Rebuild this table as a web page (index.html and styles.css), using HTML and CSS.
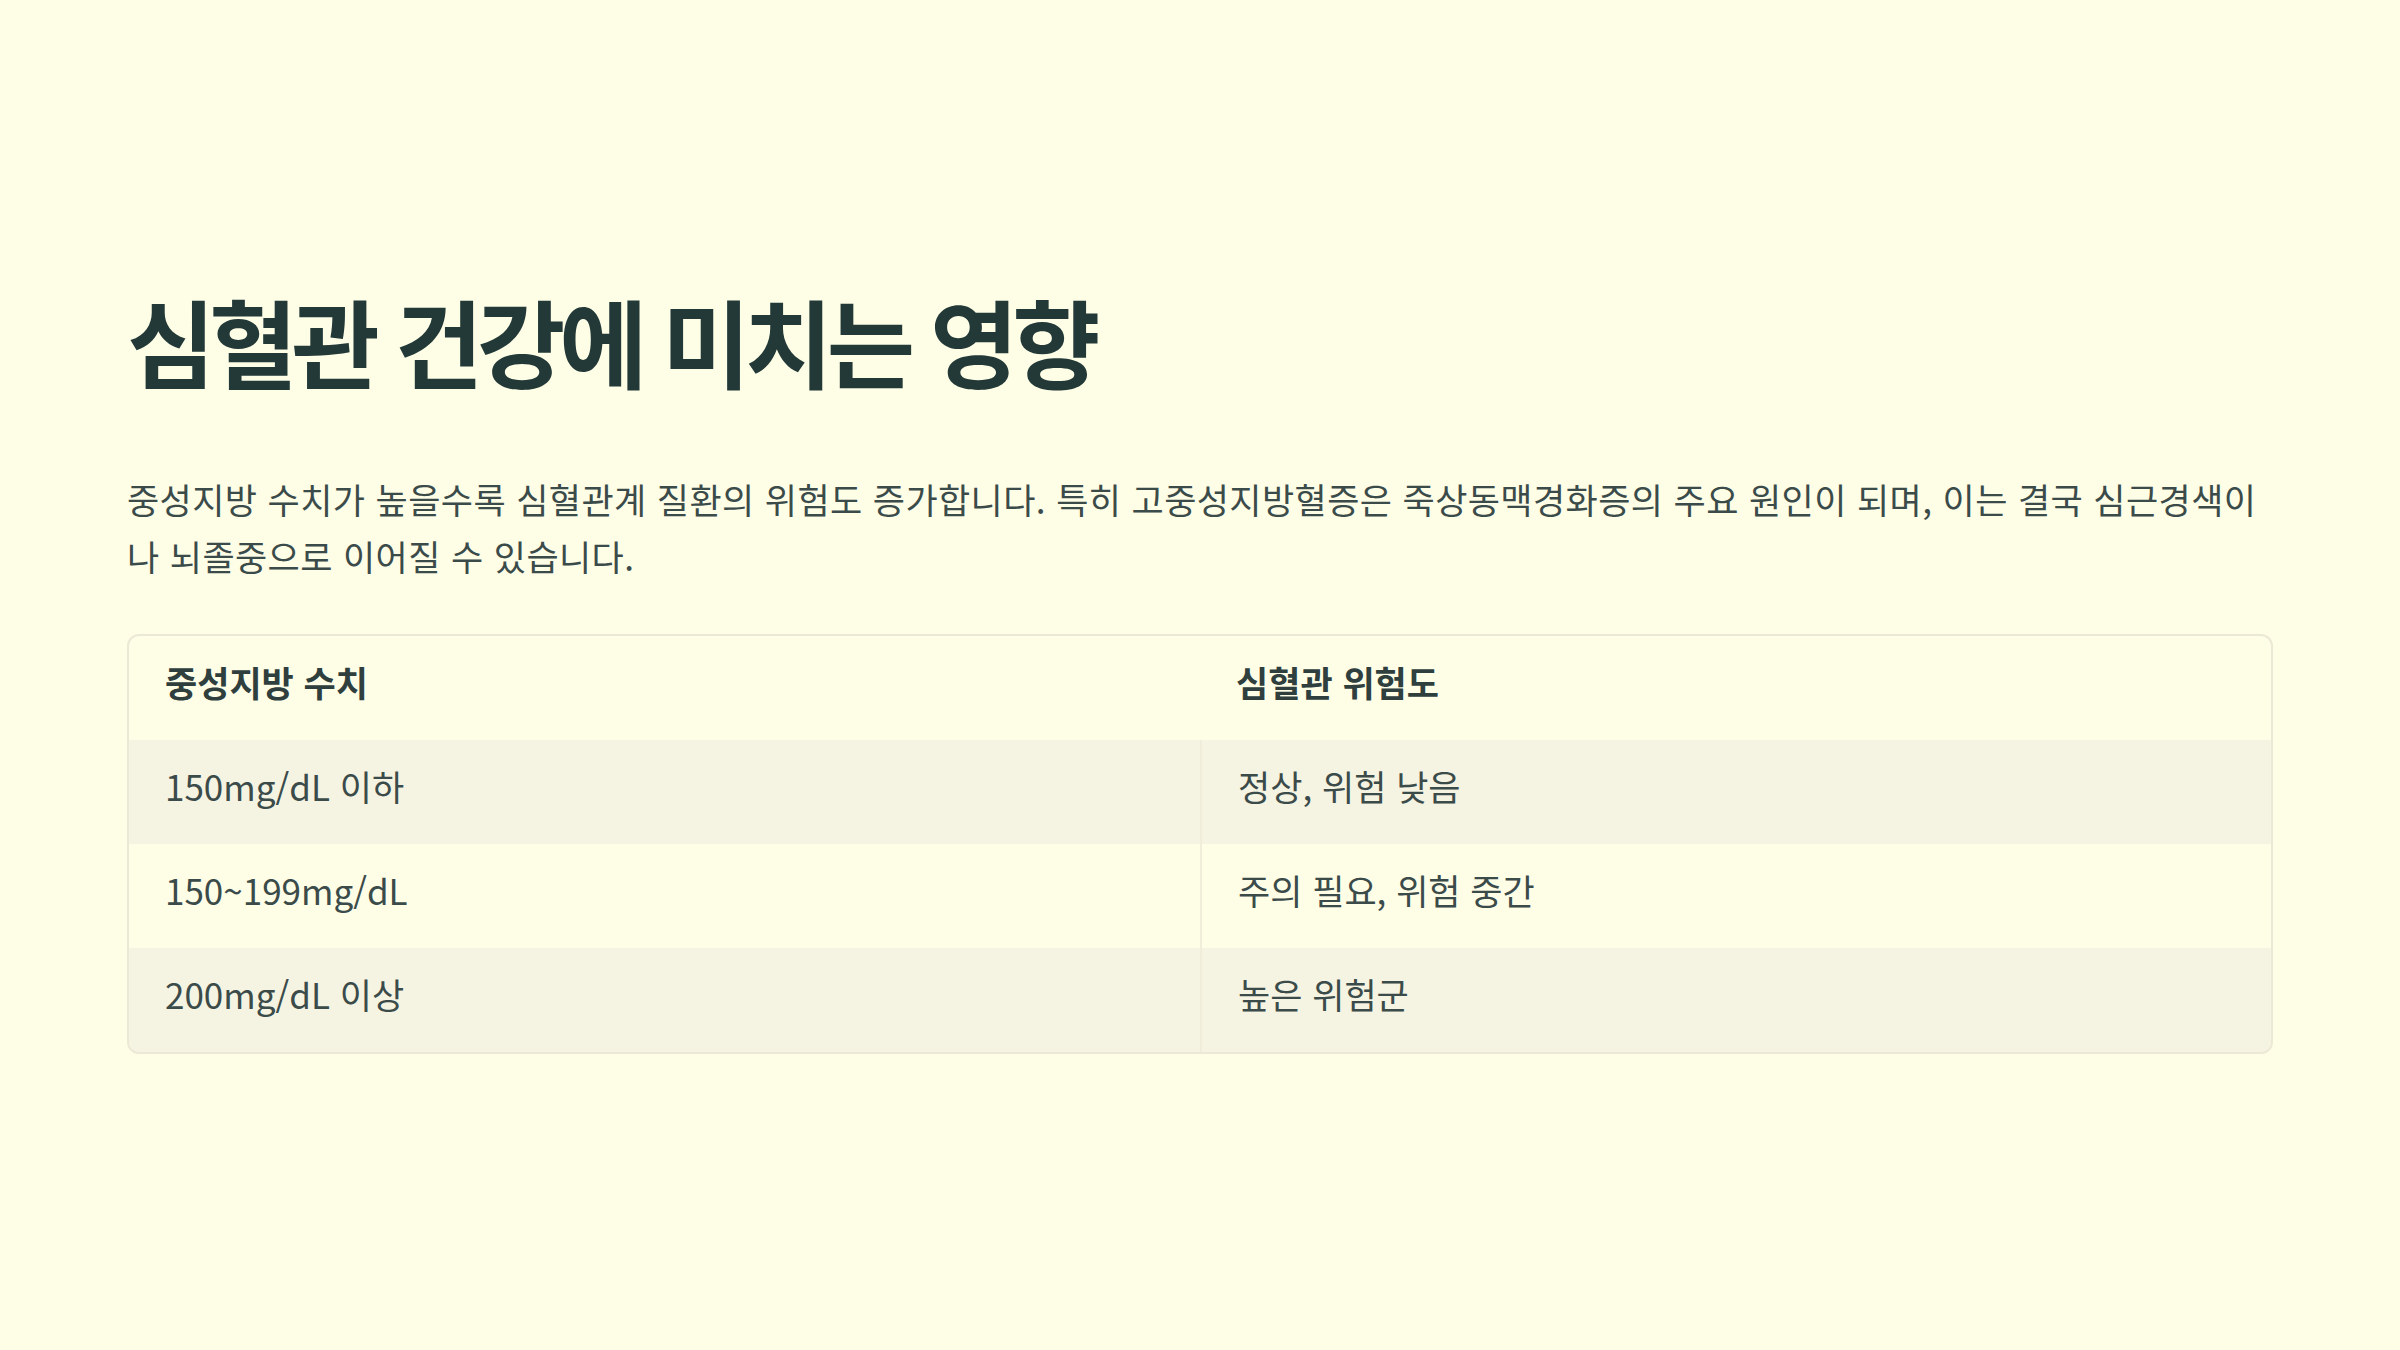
FILE: index.html
```html
<!DOCTYPE html>
<html lang="ko">
<head>
<meta charset="utf-8">
<link rel="stylesheet" href="styles.css">
</head>
<body>
<main class="slide">
  <h1 class="title">심혈관 건강에 미치는 영향</h1>
  <p class="lead">중성지방 수치가 높을수록 심혈관계 질환의 위험도 증가합니다. 특히 고중성지방혈증은 죽상동맥경화증의 주요 원인이 되며, 이는 결국 심근경색이나 뇌졸중으로 이어질 수 있습니다.</p>
  <div class="table">
    <div class="row head">
      <div class="cell">중성지방 수치</div>
      <div class="cell">심혈관 위험도</div>
    </div>
    <div class="row alt">
      <div class="cell">150mg/dL 이하</div>
      <div class="cell">정상, 위험 낮음</div>
    </div>
    <div class="row">
      <div class="cell">150~199mg/dL</div>
      <div class="cell">주의 필요, 위험 중간</div>
    </div>
    <div class="row alt">
      <div class="cell">200mg/dL 이상</div>
      <div class="cell">높은 위험군</div>
    </div>
  </div>
</main>
</body>
</html>
```

FILE: styles.css
```css
html, body {
  margin: 0;
  padding: 0;
  background: #fefde6;
}
body {
  width: 2400px;
  height: 1350px;
  font-family: "Noto Sans CJK KR", "Noto Sans", sans-serif;
  color: #3b4b4a;
}
.slide {
  box-sizing: border-box;
  padding: 282px 127px 0 127px;
}
.title {
  margin: 0;
  font-size: 96px;
  line-height: 1.2;
  font-weight: 700;
  color: #223938;
  letter-spacing: -0.063em;
}
.lead {
  margin: 73px 0 0 0;
  font-size: 35px;
  line-height: 57px;
  letter-spacing: 0.4px;
  color: #3b4b4a;
  max-width: 2146px;
}
.table {
  margin-top: 50px;
  width: 2146px;
  border: 2px solid #ebe9d5;
  border-radius: 12px;
  overflow: hidden;
  box-sizing: border-box;
}
.row {
  display: grid;
  grid-template-columns: 1fr 1fr;
  height: 104px;
}
.row.alt {
  background: #f5f3e1;
}
.cell {
  display: flex;
  align-items: center;
  padding: 0 36px 14px 36px;
  font-size: 35px;
  letter-spacing: 0;
  color: #3b4b4a;
}
.row:not(.head) .cell + .cell {
  border-left: 2px solid #f0eedb;
}
.row.head .cell {
  font-weight: 700;
  color: #2e3f3e;
}
```
